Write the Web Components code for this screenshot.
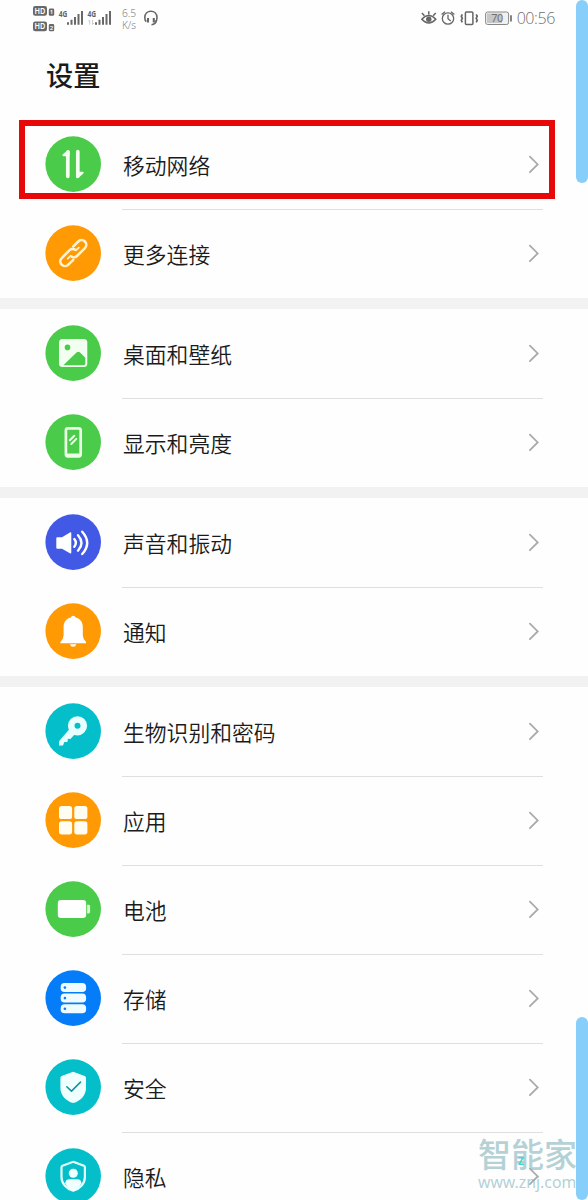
<!DOCTYPE html>
<html lang="zh-CN">
<head>
<meta charset="utf-8">
<title>设置</title>
<style>
  body {
    margin: 0;
    height: 1200px;
    overflow: hidden;
    background: #fefefe;
    color: #1b1b1b;
    font-family: "Noto Sans", "Noto Sans CJK SC", sans-serif;
  }
</style>
</head>
<body>
<settings-page>
  <status-bar slot="status" speed="6.5" battery="70" time="00:56"></status-bar>
  <settings-group>
    <settings-item icon="network" color="#4acb49">移动网络</settings-item>
    <settings-item icon="link" color="#ff9a05">更多连接</settings-item>
  </settings-group>
  <settings-group>
    <settings-item icon="picture" color="#4acb49">桌面和壁纸</settings-item>
    <settings-item icon="display" color="#4acb49">显示和亮度</settings-item>
  </settings-group>
  <settings-group>
    <settings-item icon="sound" color="#4259e6">声音和振动</settings-item>
    <settings-item icon="bell" color="#ff9a05">通知</settings-item>
  </settings-group>
  <settings-group>
    <settings-item icon="key" color="#04bfc9">生物识别和密码</settings-item>
    <settings-item icon="apps" color="#ff9a05">应用</settings-item>
    <settings-item icon="battery" color="#4acb49">电池</settings-item>
    <settings-item icon="storage" color="#067df8">存储</settings-item>
    <settings-item icon="shield" color="#04bfc9">安全</settings-item>
    <settings-item icon="privacy" color="#04bfc9">隐私</settings-item>
  </settings-group>
  <focus-frame slot="overlay"></focus-frame>
  <edge-bar slot="overlay" style="top: 0"></edge-bar>
  <edge-bar slot="overlay" style="top: 1017px"></edge-bar>
  <site-mark slot="overlay" url="www.znj.com">智能家</site-mark>
</settings-page>

<script>
  // white glyphs, drawn on a 56x56 disc
  const icons = {
    network: `
      <path d="M22.8 40.3V16M32.8 15.5V40" fill="none" stroke="#f3fff1" stroke-width="3.7" stroke-linecap="round"/>
      <path d="M17.6 18.6L22.6 14.2Q24.6 13.3 24.6 15.5V20.2H18.2Q16.8 19.8 17.6 18.6ZM38.4 37.4L33.2 42Q31 43 31 40.8V35.8H37.8Q39.3 36 38.4 37.4Z" fill="#f3fff1"/>`,
    link: `
      <g fill="none" stroke="#fff3cf" stroke-width="2.6" stroke-linecap="round" transform="rotate(-45 28.3 28.1)">
        <path d="M23.5 32.8H16.6a4.7 4.7 0 0 1 0-9.4H27.4a4.7 4.7 0 0 1 4.5 3.4"/>
        <path d="M33.1 23.4H40a4.7 4.7 0 0 1 0 9.4H29.2a4.7 4.7 0 0 1-4.5-3.4"/>
        <path d="M20.5 28.1H24.5M32.1 28.1H36.1" stroke-width="1.8"/>
      </g>`,
    picture: `
      <rect x="14" y="14" width="28.3" height="28" rx="3.5" fill="#f2fff0"/>
      <circle cx="22.5" cy="22.4" r="2.8" fill="#4acb49"/>
      <path d="M18.3 40.3L31.8 27.3Q33.3 26 34.8 27.3L40.3 32.8V38.5Q40.3 40.3 38.5 40.3Z" fill="#4acb49"/>`,
    display: `
      <rect x="20.9" y="14.3" width="14.8" height="28" rx="2" fill="none" stroke="#e9ffe6" stroke-width="2.7"/>
      <path d="M22 40.6H34.6M24.8 26.3l4.5-4.6M26.3 30l5-5.1" fill="none" stroke="#e9ffe6" stroke-width="2" stroke-linecap="round"/>`,
    sound: `
      <path d="M12.2 23.3H17L24.9 18.4Q26.3 17.7 26.3 19.2V38.6Q26.3 40 24.9 39.2L17 34.7H12.2Q11.3 34.7 11.3 33.8V24.2Q11.3 23.3 12.2 23.3Z"/>
      <path d="M29.3 25.1Q32.4 28.9 29.3 32.8M33 21.2Q40 28.9 33 36.7M37.2 17.7Q47.2 28.9 37.2 40" fill="none" stroke="#fff" stroke-width="2.4" stroke-linecap="round"/>`,
    bell: `
      <path d="M28.2 12.8Q30.2 12.8 30.6 14.4C35.4 15.6 37.8 19.2 37.8 23.9V32.5Q38 36 41 39.1V40.3H15.4V39.1Q18.4 36 18.6 32.5V23.9C18.6 19.2 21 15.6 25.8 14.4Q26.2 12.8 28.2 12.8Z"/>
      <path d="M25 41.2H31.3Q30.7 43.8 28.2 43.8T25 41.2Z"/>`,
    key: `
      <circle cx="32.5" cy="22.8" r="6.3" fill="none" stroke="#e9ffff" stroke-width="6.6"/>
      <path d="M25.2 25.2L14.8 37.3Q14 38.2 14 39.5V42.6H18L19.3 38.9H22.4L22.9 35.7L25.4 36L30.5 30.5Z" fill="#e9ffff"/>`,
    apps: `
      <g fill="#fffdf2">
        <rect x="14" y="14" width="13.1" height="13.1" rx="2.7"/>
        <rect x="29.3" y="14" width="13.1" height="13.1" rx="2.7"/>
        <rect x="14" y="29.3" width="13.1" height="13.1" rx="2.7"/>
        <rect x="29.3" y="29.3" width="13.1" height="13.1" rx="2.7"/>
      </g>`,
    battery: `
      <rect x="12.8" y="19.1" width="28.4" height="18" rx="3.3"/>
      <path d="M42.2 23.8H43.8Q45.1 23.8 45.1 25.2V31Q45.1 32.4 43.8 32.4H42.2Z" fill="#d6ffd2"/>`,
    storage: `
      <g fill="#effbff">
        <rect x="15.7" y="13.1" width="25.4" height="9" rx="3.8"/>
        <rect x="15.7" y="23.6" width="25.4" height="9" rx="3.8"/>
        <rect x="15.7" y="34.2" width="25.4" height="9" rx="3.8"/>
      </g>
      <g fill="#067df8">
        <circle cx="19.9" cy="17.6" r="1.3"/><circle cx="19.9" cy="28.1" r="1.3"/><circle cx="19.9" cy="38.7" r="1.3"/>
      </g>`,
    shield: `
      <path d="M28.2 12.7L39.7 17Q41 17.5 41 19V29C41 36 35.8 42 28.2 44.1C20.6 42 15.4 36 15.4 29V19Q15.4 17.5 16.7 17Z" fill="#f0ffff"/>
      <path d="M21.8 27.7l4.7 4.4 9-9" fill="none" stroke="#178f99" stroke-width="1.5" stroke-linecap="round" stroke-linejoin="round"/>`,
    privacy: `
      <path d="M28.2 13.8L38.9 17.8Q39.9 18.2 39.9 19.3V29C39.9 35.5 35.2 40.8 28.2 42.8C21.2 40.8 16.5 35.5 16.5 29V19.3Q16.5 18.2 17.5 17.8Z" fill="none" stroke="#e4ffff" stroke-width="2.2"/>
      <circle cx="28.3" cy="25.2" r="4.5" fill="#f0ffff"/>
      <path d="M20.3 35.5Q20.3 31.2 24.5 31.2H32.2Q36.4 31.2 36.4 35.5Q33.5 40.6 28.2 43Q23 40.6 20.3 35.5Z" fill="#f0ffff"/>`
  };

  class SettingsPage extends HTMLElement {
    constructor() {
      super();
      this.attachShadow({ mode: 'open' }).innerHTML = `
        <style>
          :host {
            display: flex;
            flex-direction: column;
            position: relative;
            height: 1200px;
            overflow: hidden;
          }
          h1 {
            flex: none;
            margin: 0;
            padding: 18px 0 0 46px;
            height: 66px;
            font: 500 27.2px/40px "Noto Sans CJK SC", sans-serif;
          }
          main {
            display: flex;
            flex-direction: column;
            gap: 11px;
            background: #f2f2f2;
          }
        </style>
        <slot name="status"></slot>
        <h1>设置</h1>
        <main><slot></slot></main>
        <slot name="overlay"></slot>
      `;
    }
  }

  class StatusBar extends HTMLElement {
    connectedCallback() {
      const bars = `
        <path d="M1 14.2v-2.4M4.5 14.2V9.3M8 14.2V6.4M11.5 14.2V3.5M15 14.2V.5" fill="none" stroke="#686868" stroke-width="2"/>`;
      this.attachShadow({ mode: 'open' }).innerHTML = `
        <style>
          :host {
            display: flex;
            flex: none;
            justify-content: space-between;
            box-sizing: border-box;
            height: 36px;
            padding: 0 33px;
            color: #707070;
          }
          .side { display: flex; align-items: center; height: 36px; }
          svg { display: block; flex: none; }
          text { font-family: "Noto Sans", sans-serif; }
          .speed {
            display: flex;
            flex-direction: column;
            align-items: center;
            width: 18px;
            margin: 2px 6px 0 8px;
            font: 300 10.2px/12px "Open Sans", "Noto Sans", sans-serif;
          }
          .time { margin-left: 4px; font: 300 16px/36px "Open Sans", "Noto Sans", sans-serif; letter-spacing: -.4px; }
        </style>
        <div class="side">
          <svg width="22" height="36">
            <rect x="0" y="6" width="14" height="9.8" rx="2.2" fill="#686868"/>
            <rect x="0" y="21.4" width="14" height="9.8" rx="2.2" fill="#686868"/>
            <rect x="15.8" y="8.5" width="5.4" height="7.3" rx="1.4" fill="#686868"/>
            <rect x="15.8" y="24" width="5.4" height="7.3" rx="1.4" fill="#686868"/>
            <g fill="#fff" font-weight="600">
              <text x="1.6" y="14" font-size="8.6" textLength="10.8" lengthAdjust="spacingAndGlyphs">HD</text>
              <text x="1.6" y="29.4" font-size="8.6" textLength="10.8" lengthAdjust="spacingAndGlyphs">HD</text>
              <text x="16.8" y="14.4" font-size="6">1</text>
              <text x="16.8" y="29.9" font-size="6">2</text>
            </g>
          </svg>
          <svg width="29" height="36">
            <text x="3.8" y="17.3" font-size="9.4" font-weight="700" fill="#606060" textLength="8.6" lengthAdjust="spacingAndGlyphs">4G</text>
            <g transform="translate(12 10.5)">${bars}</g>
          </svg>
          <svg width="28" height="36">
            <text x="3.5" y="17.3" font-size="9.4" font-weight="700" fill="#606060" textLength="8.6" lengthAdjust="spacingAndGlyphs">4G</text>
            <path d="M5.7 24.5v-4.5l-1.5 1.5M8.5 20v4.5l1.5-1.5" fill="none" stroke="#ccc" stroke-width="1"/>
            <g transform="translate(11 10.5)">${bars}</g>
          </svg>
          <div class="speed"><span>${this.getAttribute('speed')}</span><span>K/s</span></div>
          <svg width="14" height="36" fill="none" stroke="#666" stroke-width="1.6">
            <path d="M2.4 21.5Q.8 20.7 .8 17.7C.8 9 13 9 13 17.7Q13 20.7 11.4 21.5"/>
            <path d="M4 18v4.4M9.8 18v4.4" stroke-width="2.1"/>
            <path d="M12.3 20.7Q11.8 24.3 7.5 24.7"/>
          </svg>
        </div>
        <div class="side">
          <svg width="16" height="36" fill="none" stroke="#666" stroke-width="1.5">
            <path d="M.8 19.2Q7.8 11.8 14.8 19.2Q7.8 26.6 .8 19.2ZM3.4 15.7L.9 12.9M7.8 14.4V11.2M12.2 15.7l2.5-2.8"/>
            <circle cx="7.8" cy="19.2" r="2.7" fill="#666" stroke="none"/>
          </svg>
          <svg width="22" height="36" fill="none" stroke="#666" stroke-width="1.3">
            <circle cx="11" cy="18.5" r="5.7"/>
            <path d="M4.6 14.5L8 11.8M17.4 14.5L14 11.8M11 14.8v3.9l2.7 2.2"/>
          </svg>
          <svg width="26" height="36" fill="none" stroke="#666" stroke-width="1.5">
            <rect x="6.4" y="12" width="7.5" height="12.4" rx="1"/>
            <path d="M3.3 14.3l-1 2 1 2-1 2 1 2M17.2 14.3l1 2-1 2 1 2-1 2" stroke-width="1.7"/>
          </svg>
          <svg width="28" height="36">
            <rect x=".6" y="12" width="23" height="12.5" rx="2" fill="#f1f1f1" stroke="#888" stroke-width="1"/>
            <path d="M2 13.5H17V23H2Z" fill="#c7c7c7"/>
            <path d="M26 15.3v6.2" stroke="#777" stroke-width="1.8"/>
            <text x="6.2" y="22.1" font-size="10.8" fill="#707070" textLength="12">${this.getAttribute('battery')}</text>
          </svg>
          <span class="time">${this.getAttribute('time')}</span>
        </div>
      `;
    }
  }

  class SettingsGroup extends HTMLElement {
    constructor() {
      super();
      this.attachShadow({ mode: 'open' }).innerHTML = `
        <style>
          :host { display: block; background: #fefefe; }
          ::slotted(:not(:first-child)) { --line: #dfdfdf; }
        </style>
        <slot></slot>
      `;
    }
  }

  class SettingsItem extends HTMLElement {
    connectedCallback() {
      this.attachShadow({ mode: 'open' }).innerHTML = `
        <style>
          :host { display: flex; height: 89px; padding: 0 45px; }
          .disc { flex: none; margin-top: 16px; }
          .body {
            display: flex;
            flex: 1;
            align-items: center;
            justify-content: space-between;
            box-sizing: border-box;
            height: 89px;
            margin-left: 21px;
            padding: 0 3px 0 1px;
            border-top: 1px solid var(--line, transparent);
          }
          .label { padding-bottom: 1px; font: 350 21.8px/32px "Noto Sans CJK SC", sans-serif; }
        </style>
        <svg class="disc" width="56" height="56" fill="#fff">
          <circle cx="28.2" cy="28.1" r="27.8" fill="${this.getAttribute('color')}"/>
          ${icons[this.getAttribute('icon')]}
        </svg>
        <div class="body">
          <span class="label"><slot></slot></span>
          <svg width="12" height="20" fill="none" stroke="#aaa" stroke-width="1.8" stroke-linecap="round">
            <path d="M1.9 1.6L9.7 9.4L1.9 17.2"/>
          </svg>
        </div>
      `;
    }
  }

  // red marker around the first row
  class FocusFrame extends HTMLElement {
    constructor() {
      super();
      this.attachShadow({ mode: 'open' }).innerHTML = `
        <style>
          :host {
            position: absolute;
            left: 19px;
            top: 120px;
            box-sizing: border-box;
            width: 536px;
            height: 79px;
            border: 6px solid #e70909;
          }
        </style>
      `;
    }
  }

  class EdgeBar extends HTMLElement {
    constructor() {
      super();
      this.attachShadow({ mode: 'open' }).innerHTML = `
        <style>
          :host {
            position: absolute;
            right: 0;
            width: 12px;
            height: 183px;
            border-radius: 6px;
            background: #87cefa;
          }
        </style>
      `;
    }
  }

  class SiteMark extends HTMLElement {
    connectedCallback() {
      this.attachShadow({ mode: 'open' }).innerHTML = `
        <style>
          :host {
            position: absolute;
            left: 478px;
            top: 1132px;
            color: rgba(130, 180, 188, .62);
            white-space: nowrap;
          }
          .name { font: 500 33px/42px "Noto Sans CJK SC", sans-serif; }
          .url { font: 400 15.8px/16px "Noto Sans", sans-serif; }
          .spark {
            position: absolute;
            left: 40px;
            top: 23px;
            color: #3fd5d5;
            font: 700 10px/12px "Noto Sans", sans-serif;
          }
        </style>
        <div class="name"><slot></slot></div>
        <div class="url">${this.getAttribute('url')}</div>
        <span class="spark">Z</span>
      `;
    }
  }

  customElements.define('settings-page', SettingsPage);
  customElements.define('status-bar', StatusBar);
  customElements.define('settings-group', SettingsGroup);
  customElements.define('settings-item', SettingsItem);
  customElements.define('focus-frame', FocusFrame);
  customElements.define('edge-bar', EdgeBar);
  customElements.define('site-mark', SiteMark);
</script>
</body>
</html>
